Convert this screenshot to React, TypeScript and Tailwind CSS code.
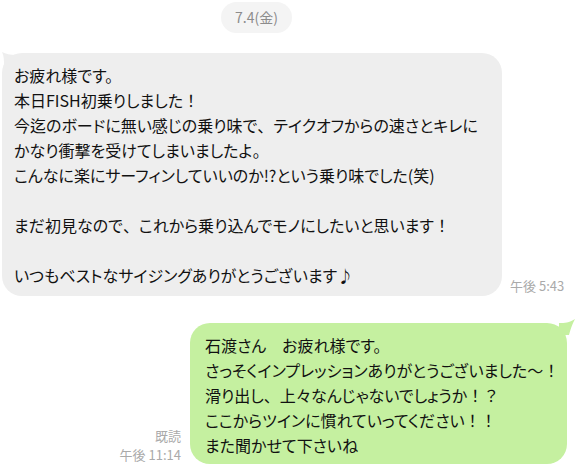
import React from "react";

const leftText = `お疲れ様です。
本日FISH初乗りしました！
今迄のボードに無い感じの乗り味で、テイクオフからの速さとキレに
かなり衝撃を受けてしまいましたよ。
こんなに楽にサーフィンしていいのか!?という乗り味でした(笑)

まだ初見なので、これから乗り込んでモノにしたいと思います！

いつもベストなサイジングありがとうございます♪`;

const rightText = `石渡さん　お疲れ様です。
さっそくインプレッションありがとうございました～！
滑り出し、上々なんじゃないでしょうか！？
ここからツインに慣れていってください！！
また聞かせて下さいね`;

function Rich({ text }: { text: string }) {
  const parts = text.split(/([！？、])/);
  return (
    <>
      {parts.map((p, i) =>
        /^[！？、]$/.test(p) ? (
          <span key={i} className="[font-feature-settings:normal]">
            {p}
          </span>
        ) : (
          <React.Fragment key={i}>{p}</React.Fragment>
        )
      )}
    </>
  );
}

export default function App() {
  return (
    <div className="w-[575px] h-[467px] bg-white overflow-hidden relative font-['Noto_Sans_CJK_JP','Noto_Sans',sans-serif] text-[#111111]">
      <div className="pt-[2px] flex">
        <div className="ml-[221px] h-[31px] px-[14px] rounded-full bg-[#f4f4f4] text-[14px] text-[#8c8c8c] flex items-center">
          7.4(金)
        </div>
      </div>

      <div className="mt-[20px] flex items-end pl-[2px]">
        <div className="relative w-[500px] bg-[#eeeeee] rounded-[20px] pl-[12px] pr-[10px] pt-[10px] pb-[8px]">
          <svg className="absolute left-[0px] top-[-1px]" width="14" height="14" viewBox="0 0 14 14">
            <path d="M0 0 C4 2 8 3 14 3 L14 14 L2 14 C2 8 2 4 0 0 Z" fill="#eeeeee" />
          </svg>
          <p className="relative whitespace-pre text-[16px] leading-[25px] [font-feature-settings:'palt']">
            <Rich text={leftText} />
          </p>
        </div>
        <div className="ml-[8px] mb-[2px] text-[13px] text-[#aaaaaa] leading-[16px]">午後 5:43</div>
      </div>

      <div className="mt-[27px] flex items-end justify-end pr-[8px]">
        <div className="mr-[9px] mb-[0px] flex flex-col items-end text-[13px] text-[#aaaaaa] leading-[19px]">
          <span>既読</span>
          <span>午後 11:14</span>
        </div>
        <div className="relative w-[377px] bg-[#c5f0a0] rounded-[20px] pl-[15px] pr-[8px] pt-[10px] pb-[6px]">
          <svg className="absolute right-[-8px] top-[-4px]" width="16" height="16" viewBox="0 0 16 16">
            <path d="M0 4 C6 4 10 4 16 0 C14 4 12 8 10 16 L0 16 Z" fill="#c5f0a0" />
          </svg>
          <p className="relative whitespace-pre text-[16px] leading-[25px] [font-feature-settings:'palt']">
            <Rich text={rightText} />
          </p>
        </div>
      </div>
    </div>
  );
}
